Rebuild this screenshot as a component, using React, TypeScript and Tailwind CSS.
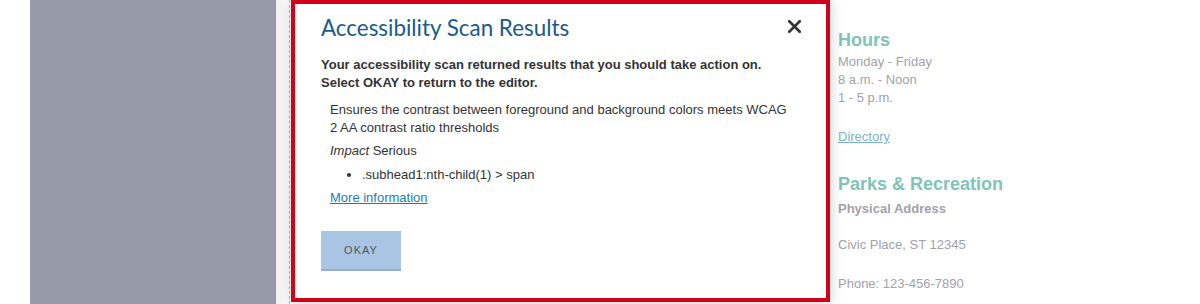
import { X } from "lucide-react";

const sans = "font-['Liberation_Sans',Arial,sans-serif]";

function ScanModal() {
  return (
    <div className="relative z-10 h-[302px] w-[539px] shrink-0 border-4 border-[#d0021b] bg-white shadow-[0_0_12px_rgba(0,0,0,0.22)]">
      <div className="flex items-start justify-between pl-[26px] pr-[21px] pt-[10px]">
        <h2 className="font-['Lato',sans-serif] text-[22.4px] leading-[28px] text-[#1b5a8a]">Accessibility Scan Results</h2>
        <X className="mt-[2px] h-[21px] w-[21px] text-[#333]" strokeWidth={3} />
      </div>
      <div className={`${sans} px-[26px] pt-[14px] text-[13px] leading-[18px] text-[#333]`}>
        <p className="font-bold">
          Your accessibility scan returned results that you should take action on.
          <br />
          Select OKAY to return to the editor.
        </p>
        <div className="mt-[9px] pl-[9px] pr-[10px]">
          <p>Ensures the contrast between foreground and background colors meets WCAG 2 AA contrast ratio thresholds</p>
          <p className="mt-[5px]">
            <em>Impact</em> Serious
          </p>
          <ul className="mt-[6px] list-disc pl-[32px]">
            <li>.subhead1:nth-child(1) &gt; span</li>
          </ul>
          <a href="#" className="mt-[5px] block text-[#1a7fa8] underline">
            More information
          </a>
        </div>
        <button className="mt-[24px] h-[40px] w-[80px] border-b-2 border-[#8fb0d0] bg-[#a8c6e4] text-[11px] tracking-[1px] text-[#555]">
          OKAY
        </button>
      </div>
    </div>
  );
}

function Sidebar() {
  return (
    <div className={`${sans} -mt-[13px] pl-[8px] text-[13px] leading-[18px] text-[#a3a1aa]`}>
      <p>Phone: 123-456-7890</p>
      <h3 className="mb-[1px] mt-[23px] text-[18px] font-bold leading-[24px] text-[#80c3b9]">Hours</h3>
      <p>Monday - Friday</p>
      <p>8 a.m. - Noon</p>
      <p>1 - 5 p.m.</p>
      <a href="#" className="mt-[21px] block text-[#7ab3cb] underline">
        Directory
      </a>
      <h3 className="mt-[26px] text-[18px] font-bold leading-[24px] text-[#80c3b9]">Parks &amp; Recreation</h3>
      <p className="mt-[4px] font-bold">Physical Address</p>
      <p className="mt-[18px]">Civic Place, ST 12345</p>
      <p className="mt-[21px]">Phone: 123-456-7890</p>
    </div>
  );
}

export default function App() {
  return (
    <div className="flex h-[304px] w-[1200px] overflow-hidden bg-white">
      <div className="w-[30px] shrink-0" />
      <div className="w-[246px] shrink-0 bg-[#969ba7]" />
      <div className="w-[13px] shrink-0 bg-gradient-to-r from-[#f0f0f0] to-white" />
      <div className="w-[2px] shrink-0 border-l border-dashed border-[#b9bcc4]" />
      <ScanModal />
      <Sidebar />
    </div>
  );
}
